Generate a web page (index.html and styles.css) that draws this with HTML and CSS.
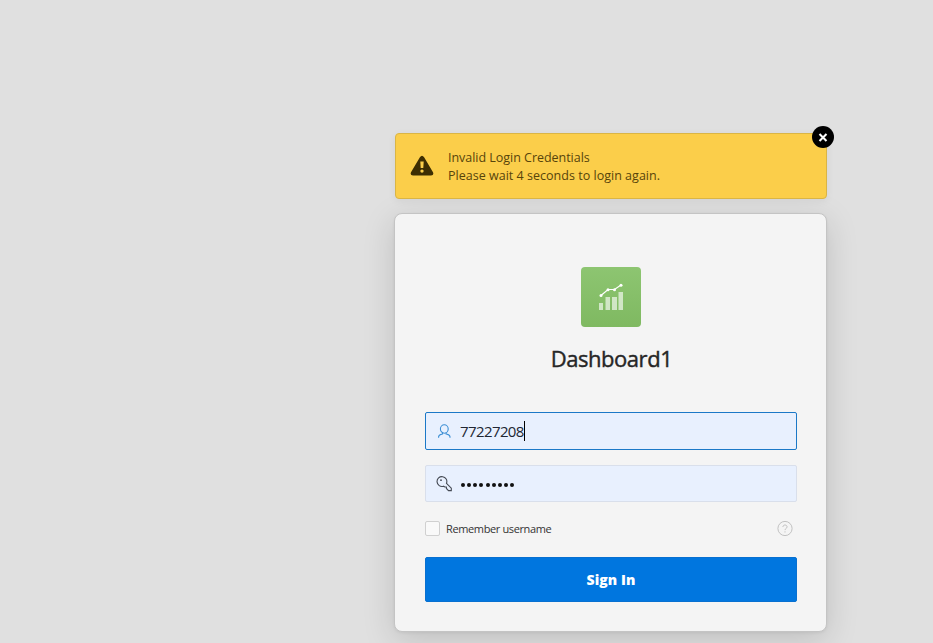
FILE: index.html
```html
<!DOCTYPE html>
<html lang="en">
<head>
<meta charset="utf-8">
<title>Dashboard1 - Sign In</title>
<link rel="stylesheet" href="styles.css">
</head>
<body>
<main class="login">
  <div class="alert">
    <svg class="alert-icon" width="24" height="24" viewBox="0 0 24 24"><path fill="#3d2e02" fill-rule="evenodd" d="M9.900 3.200Q12 .2 14.100 3.200L23 18.200Q24.200 21.400 21 21.600H3Q-.2 21.400 1 18.200ZM10.300 7.400 10.700 14H13.300L13.700 7.400ZM12 15.400A1.700 1.700 0 1 0 12 18.800A1.700 1.700 0 1 0 12 15.400Z"/></svg>
    <div class="alert-text">
      <div><span class="line-one">Invalid Login Credentials</span></div>
      <div><span class="line-two">Please wait 4 seconds to login again.</span></div>
    </div>
    <button class="close" aria-label="Close"><svg width="22" height="22" viewBox="0 0 22 22"><path d="M7.500 8 14.500 15M14.500 8 7.500 15" stroke="#fff" stroke-width="2.100"/></svg></button>
  </div>
  <form class="card">
    <div class="logo">
      <svg width="60" height="60" viewBox="0 0 60 60"><g fill="#fff" fill-opacity=".62"><path d="M18 36h4v7h-4zM24.500 30h4.500v13h-4.500zM31 30h5v13h-5zM37.500 25h4.500v18h-4.500z"/></g><path d="M20 28.500 27 22.500H33.500L40 18" fill="none" stroke="#fff" stroke-width="1.200"/><g fill="#fff"><circle cx="20" cy="28.500" r="1.500"/><circle cx="27" cy="22.700" r="1.500"/><circle cx="33.500" cy="22.700" r="1.500"/><circle cx="40" cy="18.200" r="1.500"/></g></svg>
    </div>
    <h1>Dashboard1</h1>
    <div class="field focused">
      <svg width="16" height="16" viewBox="0 0 16 16" fill="none" stroke="#3b8ed4" stroke-width="1.100"><ellipse cx="8.300" cy="6" rx="3.900" ry="4.200"/><path d="M2.600 14.800V13.800C2.600 11.900 4.500 11.500 6.500 11V9.600M14 14.800V13.800C14 11.900 12.100 11.500 10.100 11V9.600"/></svg>
      <span class="username">77227208</span><i class="caret"></i>
    </div>
    <div class="field password">
      <svg width="16" height="16" viewBox="0 0 16 16" fill="none" stroke="#454a54" stroke-width="1.100"><path d="M10.500 7.300A4.900 4.900 0 1 0 7.400 10.200L8.900 11H10.400V12.500L12.500 14.600H15.300V12.200Z"/><circle cx="5" cy="4.200" r=".9" fill="#454a54" stroke="none"/></svg>
      <span class="dots"><i></i><i></i><i></i><i></i><i></i><i></i><i></i><i></i><i></i></span>
    </div>
    <div class="options">
      <span class="checkbox"></span>
      <label>Remember username</label>
      <svg class="help" width="16" height="16" viewBox="0 0 16 16" fill="none" stroke="#c1c1c1"><circle cx="8" cy="8.500" r="7.100"/><path d="M5.900 7C5.900 4.300 10.100 4.400 10.100 6.900C10.100 8.500 8 8.400 8 10.100M8 11.300V12.500"/></svg>
    </div>
    <button class="submit" type="button"><span>Sign In</span></button>
  </form>
</main>
</body>
</html>
```

FILE: styles.css
```css
* { box-sizing: border-box; }
body {
  margin: 0;
  height: 643px;
  overflow: hidden;
  background: #e0e0e0;
  color: #262626;
  font-family: "Open Sans", "Noto Sans", sans-serif;
}
.login { width: 432px; margin-left: 395px; padding-top: 133px; }
.alert {
  position: relative;
  display: flex;
  align-items: center;
  height: 66px;
  padding-left: 14px;
  background: #fbce4a;
  border: 1px solid #dab545;
  border-radius: 4px;
  box-shadow: 0 2px 8px rgba(0, 0, 0, .06);
}
.alert-text {
  margin: 1px 0 0 14px;
  color: #57440a;
  font-size: 12.500px;
  line-height: 18px;
  white-space: nowrap;
}
.line-one { letter-spacing: -.03px; }
.line-two { letter-spacing: .02px; }
.close {
  position: absolute;
  top: -8px;
  right: -8px;
  width: 22px;
  height: 22px;
  padding: 0;
  border: 0;
  border-radius: 50%;
  background: #000;
}
.close svg, .logo svg { display: block; }
.card {
  display: flex;
  flex-direction: column;
  width: 433px;
  height: 419px;
  margin: 14px 0 0 -1px;
  padding: 53px 29px 29px 30px;
  background: #f4f4f4;
  border: 1px solid #c4c4c4;
  border-radius: 8px;
  box-shadow: 0 8px 32px rgba(0, 0, 0, .15), 0 1px 3px rgba(0, 0, 0, .06);
}
.logo {
  width: 60px;
  height: 60px;
  margin-left: 156px;
  border-radius: 4px;
  background: linear-gradient(#8dc571, #7fb961);
}
h1 {
  height: 32px;
  margin: 15px 0 38px;
  font-size: 22px;
  font-weight: 500;
  line-height: 32px;
  letter-spacing: -.45px;
  text-align: center;
  -webkit-text-stroke: .4px #262626;
  padding-left: 1px;
}
.field {
  display: flex;
  align-items: center;
  height: 38px;
  padding-left: 10px;
  background: #e8f0fe;
  border: 1px solid #1b78c7;
  border-radius: 2px;
  flex: none;
}
.username { margin-left: 8px; font-size: 15px; line-height: 20px; letter-spacing: -.6px; color: #202633; }
.caret { width: 1px; height: 20px; background: #000; }
.password { height: 37px; margin-top: 15px; border-color: #d9dfeb; }
.dots { display: flex; gap: 2.150px; margin: 2px 0 0 9px; }
.dots i { width: 4px; height: 4px; border-radius: 50%; background: #111; }
.options {
  display: flex;
  align-items: center;
  height: 16px;
  margin: 18px 0 21px;
  font-size: 11px;
}
.checkbox { width: 15px; height: 15px; border: 1px solid #d0d0d0; border-radius: 2px; background: #f9f9f9; }
label { margin-left: 6px; letter-spacing: -.37px; color: #333; }
.help { margin: 0 4px 0 auto; }
.submit {
  height: 45px;
  padding: 0;
  border: 1px solid #0870d0;
  border-radius: 2px;
  background: #0076df;
  color: #fff;
  font-family: inherit;
  font-size: 14px;
  font-weight: 800;
  letter-spacing: .1px;
}
```
